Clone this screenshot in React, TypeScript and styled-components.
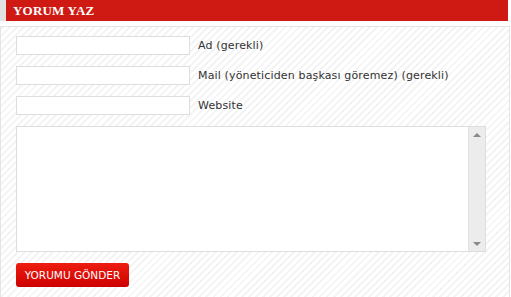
import styled, { createGlobalStyle } from 'styled-components';

const GlobalStyle = createGlobalStyle`
  body {
    margin: 0;
    background: #fff;
    font-family: "DejaVu Sans", Verdana, sans-serif;
  }
`;

const Wrapper = styled.div`
  width: 511px;
`;

const Header = styled.div`
  margin-left: 6px;
  width: 502px;
  height: 21px;
  background: #cf1a13;
  box-shadow: -6px 0 0 #e2e2e2;
  display: flex;
  align-items: center;
  padding-left: 7px;
  box-sizing: border-box;
  margin-bottom: 5px;
`;

const Title = styled.h3`
  margin: 0;
  color: #fff;
  font-family: "Liberation Serif", "Times New Roman", serif;
  font-weight: bold;
  font-size: 13px;
  letter-spacing: 0.2px;
`;

const Panel = styled.form`
  width: 510px;
  box-sizing: border-box;
  border: 1px solid #e4e4e4;
  padding: 9px 15px 10px;
  background: repeating-linear-gradient(
    -45deg,
    #ffffff 0px,
    #ffffff 3px,
    #f4f4f4 3px,
    #f4f4f4 5px
  );
  display: flex;
  flex-direction: column;
`;

const Row = styled.div`
  display: flex;
  align-items: center;
  gap: 8px;
  margin-bottom: 11px;
`;

const Input = styled.input`
  width: 174px;
  height: 19px;
  box-sizing: border-box;
  border: 1px solid #dedede;
  background: #fff;
  margin: 0;
  padding: 2px 4px;
  font: 11px "DejaVu Sans", Verdana, sans-serif;
`;

const Label = styled.label`
  font-size: 11px;
  letter-spacing: 0.15px;
  color: #333;
`;

const TextBox = styled.div`
  position: relative;
  width: 470px;
  height: 126px;
  margin-bottom: 11px;
`;

const TextArea = styled.textarea`
  display: block;
  width: 100%;
  height: 100%;
  box-sizing: border-box;
  border: 1px solid #dedede;
  background: #fff;
  margin: 0;
  padding: 2px 20px 2px 2px;
  resize: none;
  overflow: hidden;
  font: 11px "DejaVu Sans", Verdana, sans-serif;
`;

// drawn scrollbar, sits over the textarea's right edge
const ScrollBar = styled.div`
  position: absolute;
  top: 1px;
  right: 1px;
  bottom: 1px;
  width: 17px;
  background: #ececec;
  border-left: 1px solid #e2e2e2;
  box-sizing: border-box;
  display: flex;
  flex-direction: column;
  justify-content: space-between;
  align-items: center;
  padding: 6px 0 5px;
  pointer-events: none;
`;

const Arrow = styled.span<{ down?: boolean }>`
  width: 0;
  height: 0;
  border-left: 4px solid transparent;
  border-right: 4px solid transparent;
  ${({ down }) =>
    down ? 'border-top: 4px solid #8a8a8a;' : 'border-bottom: 4px solid #8a8a8a;'}
`;

const Button = styled.button`
  align-self: flex-start;
  width: 113px;
  height: 24px;
  border: 0;
  border-radius: 3px;
  background: linear-gradient(#ee1d10, #cc0000);
  color: #fff;
  font: 10.5px "DejaVu Sans", Verdana, sans-serif;
  padding: 0;
  cursor: pointer;
`;

const fields = [
  { id: 'author', label: 'Ad (gerekli)' },
  { id: 'email', label: 'Mail (yöneticiden başkası göremez) (gerekli)' },
  { id: 'url', label: 'Website' },
];

export default function App() {
  return (
    <Wrapper>
      <GlobalStyle />
      <Header>
        <Title>YORUM YAZ</Title>
      </Header>
      <Panel onSubmit={(e) => e.preventDefault()}>
        {fields.map((f) => (
          <Row key={f.id}>
            <Input id={f.id} type="text" />
            <Label htmlFor={f.id}>{f.label}</Label>
          </Row>
        ))}
        <TextBox>
          <TextArea />
          <ScrollBar>
            <Arrow />
            <Arrow down />
          </ScrollBar>
        </TextBox>
        <Button type="submit">YORUMU GÖNDER</Button>
      </Panel>
    </Wrapper>
  );
}
